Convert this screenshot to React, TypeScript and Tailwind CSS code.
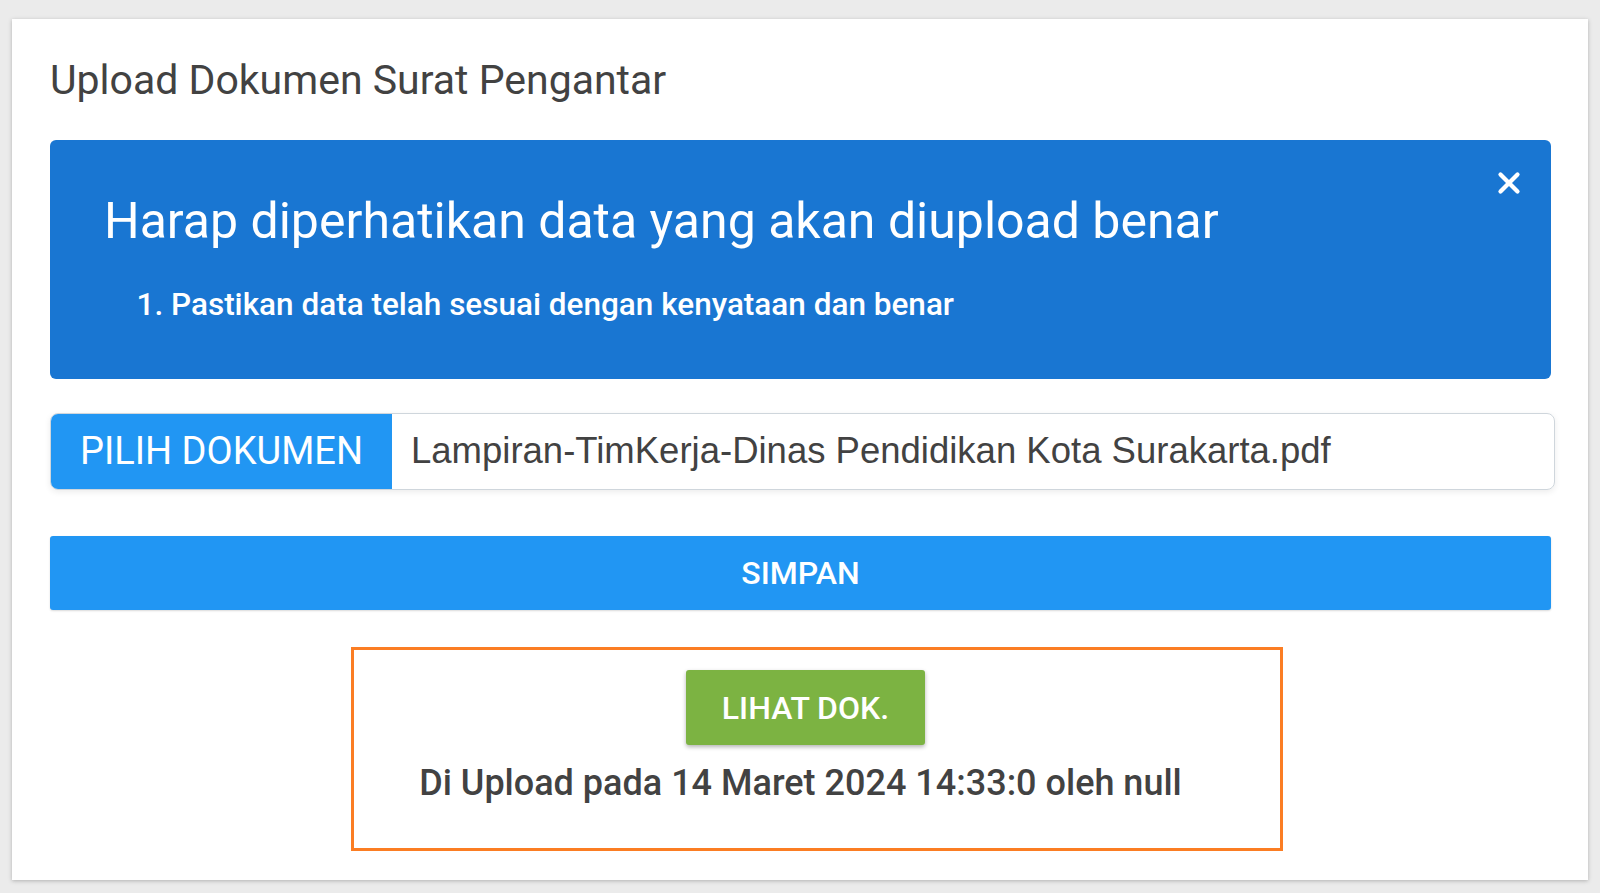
import { X } from "lucide-react";

export default function App() {
  return (
    <div className="min-h-[893px] w-full bg-[#ebebeb] pt-[19px] pl-[12px] font-['Roboto',sans-serif]">
      <div className="relative h-[861px] w-[1576px] bg-white pt-[37px] px-[38px] shadow-[0_1px_4px_rgba(0,0,0,0.25)]">
        <h2 className="text-[41px] leading-[48px] text-[#424242]">Upload Dokumen Surat Pengantar</h2>

        <div className="relative mt-[36px] h-[239px] w-[1501px] rounded-[6px] bg-[#1976d2] pl-[54px] pt-[52px] text-white">
          <button className="absolute right-[25px] top-[26px] text-white">
            <X size={34} strokeWidth={3} />
          </button>
          <h3 className="text-[50px] leading-[58px]">Harap diperhatikan data yang akan diupload benar</h3>
          <ol className="mt-[36px] list-decimal pl-[67px] text-[31.5px] font-medium leading-[38px]">
            <li>Pastikan data telah sesuai dengan kenyataan dan benar</li>
          </ol>
        </div>

        <div className="mt-[34px] flex h-[77px] w-[1505px] overflow-hidden rounded-[8px] border border-[#cfd6dc] shadow-[0_2px_6px_rgba(0,0,0,0.08)]">
          <div className="flex w-[341px] items-center justify-center bg-[#2196f3] text-[38px] text-white">PILIH DOKUMEN</div>
          <div className="flex flex-1 items-center pl-[19px] font-['Liberation_Sans',sans-serif] text-[36.5px] text-[#424242]">
            Lampiran-TimKerja-Dinas Pendidikan Kota Surakarta.pdf
          </div>
        </div>

        <button className="mt-[46px] flex h-[74px] w-[1501px] items-center justify-center rounded-[3px] bg-[#2196f3] text-[32px] font-medium text-white shadow-[0_1px_2px_rgba(0,0,0,0.15)]">
          SIMPAN
        </button>

        <div className="mt-[60px] flex w-[1501px] flex-col items-center">
          <button className="ml-[10px] flex h-[75px] w-[239px] items-center justify-center rounded-[3px] bg-[#7cb342] text-[32px] font-medium text-white shadow-[0_2px_4px_rgba(0,0,0,0.3)]">
            LIHAT DOK.
          </button>
          <p className="mt-[18px] text-[36px] font-medium leading-[40px] text-[#424242]">
            Di Upload pada 14 Maret 2024 14:33:0 oleh null
          </p>
        </div>

        <div className="pointer-events-none absolute left-[339px] top-[628px] h-[204px] w-[932px] border-[3px] border-[#fb7d23]" />
      </div>
    </div>
  );
}
